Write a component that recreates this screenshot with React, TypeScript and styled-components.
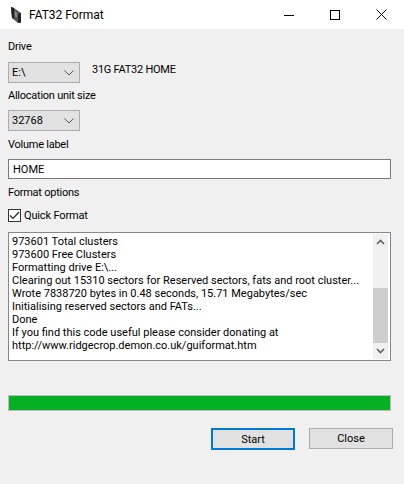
import React from 'react'
import styled, { createGlobalStyle } from 'styled-components'

const GlobalStyle = createGlobalStyle`
  html, body {
    margin: 0;
    padding: 0;
    background: #f0f0f0;
  }
  * {
    box-sizing: border-box;
  }
`

const Window = styled.div`
  width: 404px;
  height: 484px;
  overflow: hidden;
  background: #f0f0f0;
  color: #000;
  font-family: Roboto, sans-serif;
  font-size: 11px;
`

const TitleBar = styled.div`
  height: 29px;
  background: #fff;
  display: flex;
  align-items: center;
  padding-left: 11px;
`

const TitleText = styled.span`
  margin-left: 7px;
  font-size: 12px;
  flex: 1;
`

const WindowButton = styled.div`
  width: 46px;
  height: 29px;
  display: flex;
  align-items: center;
  justify-content: center;
`

const Body = styled.div`
  padding: 0 13px 0 8px;
`

const FieldLabel = styled.div<{ $top: number }>`
  height: 16px;
  line-height: 18px;
  letter-spacing: -0.25px;
  margin-top: ${p => p.$top}px;
`

const ComboRow = styled.div<{ $top: number }>`
  display: flex;
  align-items: flex-start;
  margin-top: ${p => p.$top}px;
`

const Combo = styled.div`
  width: 72px;
  height: 21px;
  background: #e1e1e1;
  border: 1px solid #adadad;
  display: flex;
  align-items: center;
  justify-content: space-between;
  padding: 0 5px 0 3px;
`

const DriveInfo = styled.span`
  margin-left: 12px;
  line-height: 16px;
  letter-spacing: -0.25px;
`

const TextField = styled.div`
  margin-top: 7px;
  height: 20px;
  background: #fff;
  border: 1px solid #7a7a7a;
  line-height: 19px;
  padding-left: 4px;
`

const CheckRow = styled.div`
  margin-top: 8px;
  height: 14px;
  display: flex;
  align-items: center;
`

const CheckBox = styled.div`
  width: 13px;
  height: 13px;
  background: #fff;
  border: 1px solid #333;
  display: flex;
  align-items: center;
  justify-content: center;
`

const CheckLabel = styled.span`
  margin-left: 3px;
  letter-spacing: -0.15px;
`

const LogBox = styled.div`
  margin-top: 10px;
  height: 129px;
  background: #fff;
  border: 1px solid #828790;
  display: flex;
`

const LogText = styled.div`
  flex: 1;
  min-width: 0;
  padding: 2px 0 0 3px;
  line-height: 13px;
  white-space: nowrap;
  overflow: hidden;
`

const ScrollBar = styled.div`
  width: 15px;
  margin: 1px 2px 1px 0;
  background: #f0f0f0;
  display: flex;
  flex-direction: column;
`

const ScrollArrow = styled.div`
  height: 17px;
  display: flex;
  align-items: center;
  justify-content: center;
`

const ScrollTrack = styled.div`
  flex: 1;
  padding-top: 37px;
`

const ScrollThumb = styled.div`
  height: 55px;
  background: #cdcdcd;
`

const Progress = styled.div`
  margin-top: 34px;
  height: 16px;
  background: #06b025;
  border: 1px solid #bcbcbc;
`

const ButtonRow = styled.div`
  margin: 17px -2px 0 0;
  display: flex;
  justify-content: flex-end;
  align-items: flex-start;
  gap: 14px;
`

const Button = styled.div<{ $focused?: boolean }>`
  width: 84px;
  height: ${p => (p.$focused ? 22 : 21)}px;
  background: #e1e1e1;
  border: ${p => (p.$focused ? '2px solid #0078d7' : '1px solid #adadad')};
  display: flex;
  align-items: center;
  justify-content: center;
`

const Chevron = ({ up }: { up?: boolean }) => (
  <svg width="9" height="6" viewBox="0 0 9 6">
    <path
      d={up ? 'M1 5L4.5 1.5L8 5' : 'M1 1L4.5 4.5L8 1'}
      fill="none"
      stroke="#606060"
      strokeWidth="1.6"
    />
  </svg>
)

const ComboArrow = () => (
  <svg width="10" height="6" viewBox="0 0 10 6">
    <path d="M0.5 0.5L5 5L9.5 0.5" fill="none" stroke="#5a5a5a" strokeWidth="1" />
  </svg>
)

const AppIcon = () => (
  <svg width="11" height="16" viewBox="0 0 11 16">
    <path d="M0 0L3 1L10 6V15.5L7 16L1 11Z" fill="#555" />
    <path d="M0 0L3 1V12L1 11Z" fill="#1c1c1c" />
    <path d="M7 7L10 6V15.5L7 16Z" fill="#222" />
    <path d="M4 4L6 6V11L4 9Z" fill="#8a8a8a" />
  </svg>
)

const LOG_LINES = [
  '973601 Total clusters',
  '973600 Free Clusters',
  'Formatting drive E:\\...',
  'Clearing out 15310 sectors for Reserved sectors, fats and root cluster...',
  'Wrote 7838720 bytes in 0.48 seconds, 15.71 Megabytes/sec',
  'Initialising reserved sectors and FATs...',
  'Done',
  'If you find this code useful please consider donating at',
  'http://www.ridgecrop.demon.co.uk/guiformat.htm',
]

export default function App(): JSX.Element {
  return (
    <Window>
      <GlobalStyle />
      <TitleBar>
        <AppIcon />
        <TitleText>FAT32 Format</TitleText>
        <WindowButton>
          <svg width="10" height="10" viewBox="0 0 10 10">
            <path d="M0 5.5H10" stroke="#000" strokeWidth="1" />
          </svg>
        </WindowButton>
        <WindowButton>
          <svg width="10" height="10" viewBox="0 0 10 10">
            <rect x="0.5" y="0.5" width="9" height="9" fill="none" stroke="#000" />
          </svg>
        </WindowButton>
        <WindowButton>
          <svg width="11" height="11" viewBox="0 0 11 11">
            <path d="M0.5 0.5L10.5 10.5M10.5 0.5L0.5 10.5" stroke="#000" strokeWidth="1" />
          </svg>
        </WindowButton>
      </TitleBar>
      <Body>
        <FieldLabel $top={9}>Drive</FieldLabel>
        <ComboRow $top={8}>
          <Combo>
            <span>E:\</span>
            <ComboArrow />
          </Combo>
          <DriveInfo>31G FAT32 HOME</DriveInfo>
        </ComboRow>
        <FieldLabel $top={4}>Allocation unit size</FieldLabel>
        <ComboRow $top={7}>
          <Combo>
            <span>32768</span>
            <ComboArrow />
          </Combo>
        </ComboRow>
        <FieldLabel $top={5}>Volume label</FieldLabel>
        <TextField>HOME</TextField>
        <FieldLabel $top={5}>Format options</FieldLabel>
        <CheckRow>
          <CheckBox>
            <svg width="11" height="9" viewBox="0 0 11 9">
              <path d="M1 4.5L4 7.5L10 1" fill="none" stroke="#222" strokeWidth="1.2" />
            </svg>
          </CheckBox>
          <CheckLabel>Quick Format</CheckLabel>
        </CheckRow>
        <LogBox>
          <LogText>
            {LOG_LINES.map(line => (
              <div key={line}>{line}</div>
            ))}
          </LogText>
          <ScrollBar>
            <ScrollArrow>
              <Chevron up />
            </ScrollArrow>
            <ScrollTrack>
              <ScrollThumb />
            </ScrollTrack>
            <ScrollArrow>
              <Chevron />
            </ScrollArrow>
          </ScrollBar>
        </LogBox>
        <Progress />
        <ButtonRow>
          <Button $focused>Start</Button>
          <Button>Close</Button>
        </ButtonRow>
      </Body>
    </Window>
  )
}
